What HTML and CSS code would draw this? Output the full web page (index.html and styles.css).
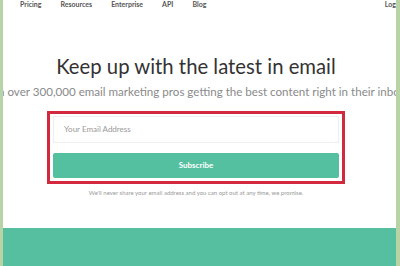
FILE: index.html
```html
<!DOCTYPE html>
<html>
<head>
<meta charset="utf-8">
<link rel="stylesheet" href="styles.css">
</head>
<body>
<div class="frame">
  <div class="page">
    <nav class="nav">
      <div class="links">
        <span>Pricing</span><span>Resources</span><span>Enterprise</span><span>API</span><span>Blog</span>
      </div>
      <span class="login">Log</span>
    </nav>
    <section class="hero">
      <h1>Keep up with the latest in email</h1>
      <p class="sub">Join over 300,000 email marketing pros getting the best content right in their inbox.</p>
      <div class="highlight">
        <div class="input">Your Email Address</div>
        <div class="button">Subscribe</div>
      </div>
      <p class="fine">We'll never share your email address and you can opt out at any time, we promise.</p>
    </section>
    <div class="band"></div>
  </div>
</div>
</body>
</html>
```
FILE: styles.css
```css
html, body { margin: 0; padding: 0; }
body { width: 400px; height: 266px; overflow: hidden; background: #b8d4a4; font-family: Lato, "Open Sans", "Liberation Sans", sans-serif; }
.frame { display: flex; height: 266px; padding: 0 4px 0 3px; box-sizing: border-box; }
.page { flex: 1; background: #fff; display: flex; flex-direction: column; overflow: hidden; }
.nav { height: 12px; display: flex; justify-content: space-between; align-items: flex-start; font-size: 7px; color: #555; font-weight: 700; line-height: 8px; }
.links { display: flex; gap: 19px; padding-left: 17px; }
.hero { display: flex; flex-direction: column; align-items: center; padding-right: 7px; }
h1 { margin: 41px 0 0; font-size: 20.3px; font-weight: 400; color: #333; line-height: 26px; white-space: nowrap; }
.sub { margin: 6px -80px 0; font-size: 11.6px; color: #8a8a8a; white-space: nowrap; line-height: 14px; }
.highlight { margin-top: 12px; width: 286px; border: 3px solid #d3293e; padding: 2px 3px 3px 3px; display: flex; flex-direction: column; gap: 10px; }
.input { height: 25px; border: 1px solid #eee; font-size: 8px; color: #999; line-height: 25px; padding-left: 10px; }
.button { height: 25px; background: #55c0a0; border-radius: 2px; color: #fff; font-size: 8px; font-weight: 700; text-align: center; line-height: 25px; }
.fine { margin: 5px 0 0; font-size: 6px; color: #999; line-height: 8px; white-space: nowrap; }
.band { margin-top: auto; height: 38px; background: #55bf9f; }
```
